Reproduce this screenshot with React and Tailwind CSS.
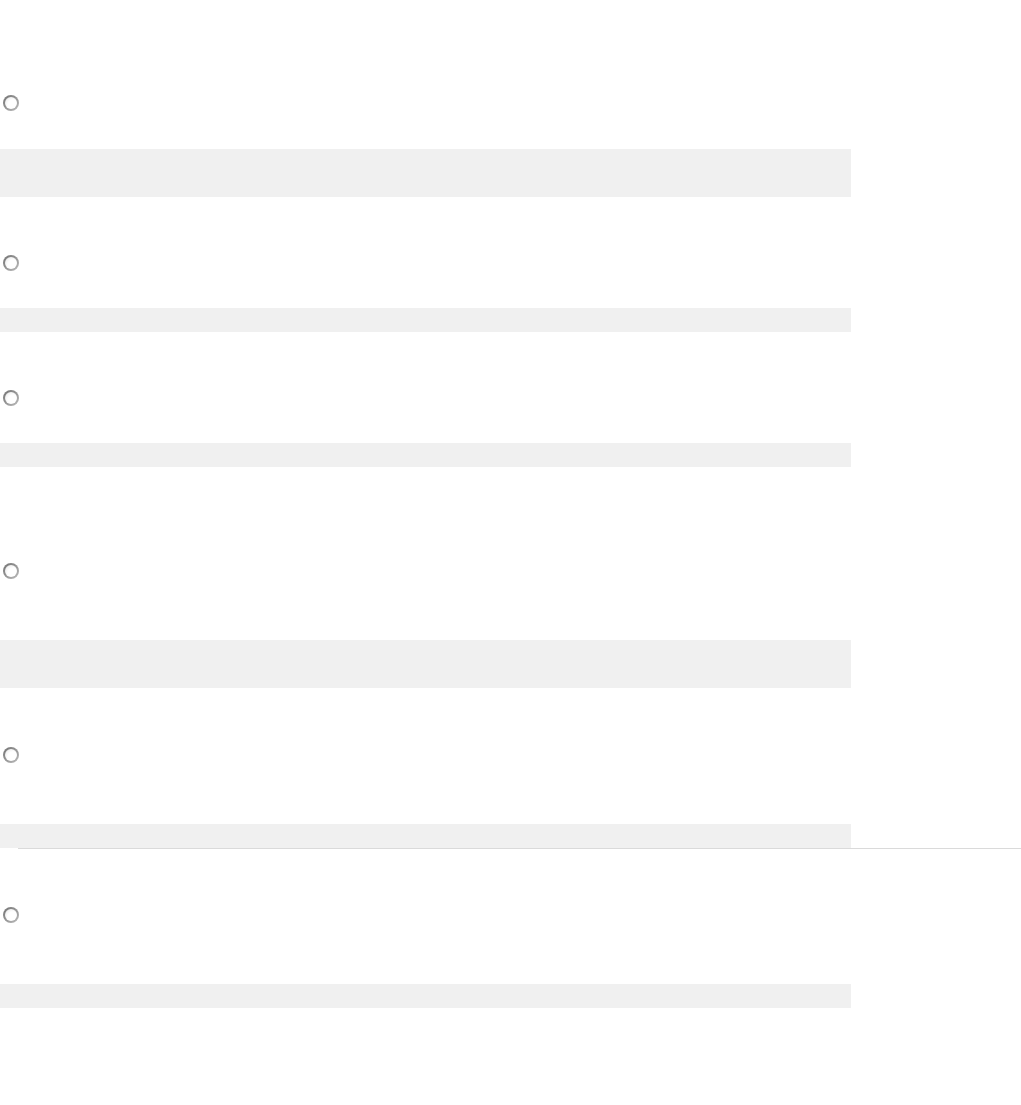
function Radio() {
  return (
    <div className="ml-[3px] w-[16px] h-[16px] rounded-full p-[2px] bg-[linear-gradient(135deg,#707070,#bdbdbd)]">
      <div className="w-full h-full rounded-full bg-[radial-gradient(circle_at_65%_65%,#ffffff_45%,#e2e2e2_100%)]" />
    </div>
  );
}

function Question({ radioTop, barGap, barHeight, divider }) {
  return (
    <div>
      <div style={{ marginTop: radioTop }}>
        <Radio />
      </div>
      <div className="w-[851px] bg-[#f0f0f0]" style={{ marginTop: barGap, height: barHeight }} />
      {divider && <div className="ml-[18px] h-px bg-[#dadada]" />}
    </div>
  );
}

const questions = [
  { radioTop: 95, barGap: 38, barHeight: 48 },
  { radioTop: 58, barGap: 37, barHeight: 24 },
  { radioTop: 58, barGap: 37, barHeight: 24 },
  { radioTop: 96, barGap: 61, barHeight: 48 },
  { radioTop: 59, barGap: 61, barHeight: 24, divider: true },
  { radioTop: 58, barGap: 61, barHeight: 24 },
];

export default function App() {
  return (
    <div className="w-[1021px] h-[1105px] bg-white overflow-hidden font-['Liberation_Sans',sans-serif]">
      {questions.map((q, i) => (
        <Question key={i} {...q} />
      ))}
    </div>
  );
}
